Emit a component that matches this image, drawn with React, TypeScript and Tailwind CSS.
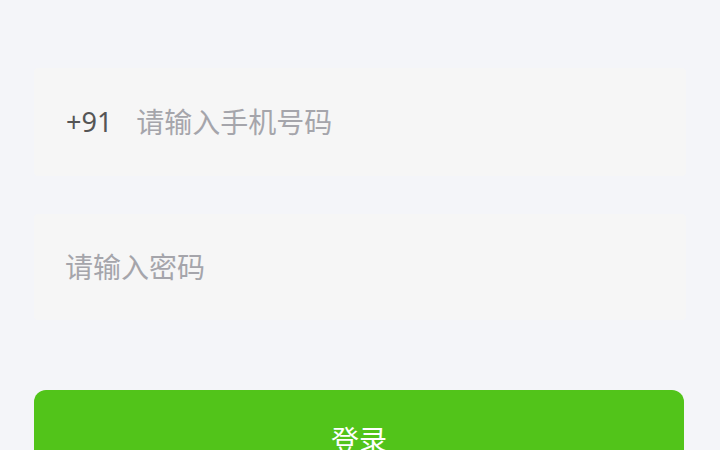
export default function App() {
  return (
    <div
      className="flex h-[450px] w-full flex-col overflow-hidden bg-[#f4f5f9] px-[34px] pt-[68px]"
      style={{ fontFamily: '"Noto Sans", "Noto Sans CJK SC", sans-serif' }}
    >
      <div className="flex h-[108px] shrink-0 items-center gap-[24px] rounded-[4px] bg-[#f6f6f6] px-[32px]">
        <span className="text-[27px] text-[#555555]">+91</span>
        <input
          className="min-w-0 flex-1 bg-transparent text-[28px] text-[#333] outline-none placeholder:text-[#a5a5ab]"
          placeholder="请输入手机号码"
        />
      </div>
      <div className="mt-[38px] flex h-[106px] shrink-0 items-center rounded-[4px] bg-[#f6f6f6] px-[31px]">
        <input
          type="password"
          className="min-w-0 flex-1 bg-transparent text-[28px] text-[#333] outline-none placeholder:text-[#a5a5ab]"
          placeholder="请输入密码"
        />
      </div>
      <button className="mt-[70px] flex h-[100px] w-[650px] shrink-0 items-center justify-center rounded-[12px] bg-[#52c41a] text-[28px] text-white">
        登录
      </button>
    </div>
  );
}
